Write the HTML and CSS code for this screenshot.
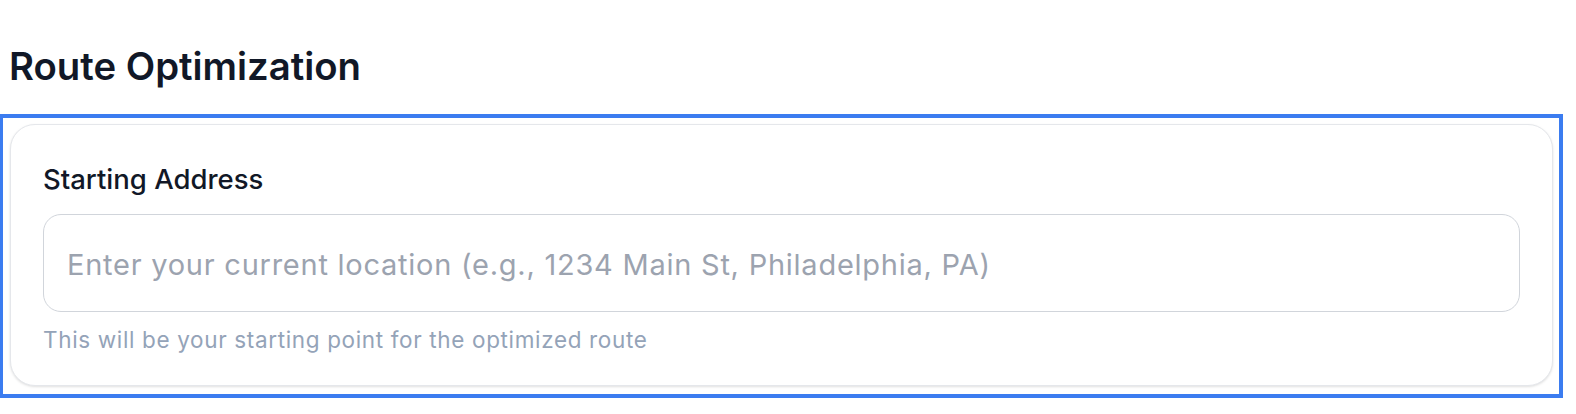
FILE: index.html
```html
<!DOCTYPE html>
<html lang="en">
<head>
<meta charset="utf-8">
<title>Route Optimization</title>
<link rel="stylesheet" href="styles.css">
</head>
<body>
  <h2 class="page-title">Route Optimization</h2>
  <div class="focus-frame">
    <section class="card">
      <label class="field-label" for="start">Starting Address</label>
      <input id="start" class="field-input" type="text" placeholder="Enter your current location (e.g., 1234 Main St, Philadelphia, PA)">
      <p class="field-help">This will be your starting point for the optimized route</p>
    </section>
  </div>
</body>
</html>
```
FILE: styles.css
```css
* { box-sizing: border-box; }
html, body { margin: 0; padding: 0; background: #ffffff; }
body { font-family: Inter, "Noto Sans", sans-serif; }

.page-title {
  margin: 0;
  padding: 43px 0 0 9px;
  height: 114px;
  font-family: Inter, sans-serif;
  font-weight: 600;
  font-size: 38.3px;
  line-height: 46px;
  color: #111827;
}

.focus-frame {
  width: 1563px;
  border: 3px solid #3b7cf0;
  border-top-width: 4px;
  border-right-width: 4px;
  border-bottom-width: 4px;
  padding: 6px 6px 8px 7px;
}

.card {
  display: flex;
  flex-direction: column;
  border: 1px solid #e5e7eb;
  border-radius: 25px;
  padding: 33px 32px 29px 32px;
  background: #ffffff;
  box-shadow: 0 1px 3px rgba(0, 0, 0, 0.08), 0 1px 2px rgba(0, 0, 0, 0.05);
}

.field-label {
  display: block;
  font-family: Inter, sans-serif;
  font-weight: 500;
  font-size: 27.5px;
  line-height: 42px;
  color: #111827;
}

.field-input {
  display: block;
  margin-top: 14px;
  width: 100%;
  height: 98px;
  border: 1.5px solid #d1d5db;
  border-radius: 18px;
  padding: 3px 22px 0 23px;
  font-family: Inter, sans-serif;
  font-size: 29px;
  letter-spacing: 0.75px;
  color: #111827;
  background: #ffffff;
  outline: none;
}
.field-input::placeholder { color: #9ca3af; opacity: 1; }

.field-help {
  margin: 11px 0 0 0;
  font-family: Inter, sans-serif;
  font-size: 22.5px;
  letter-spacing: 0.65px;
  line-height: 33px;
  color: #94a3b8;
}
```
